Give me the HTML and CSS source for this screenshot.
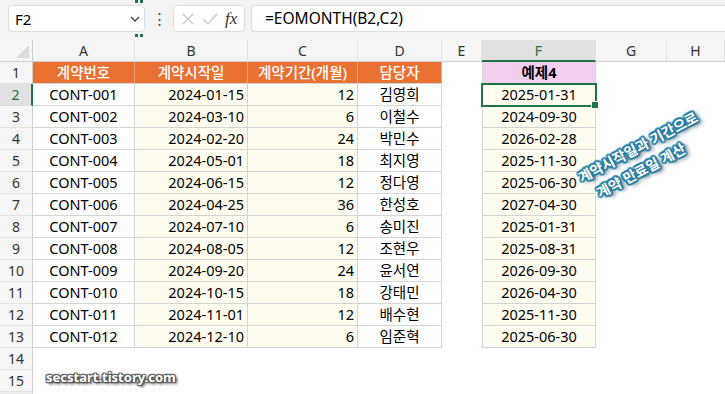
FILE: index.html
```html
<!DOCTYPE html>
<html lang="ko">
<head>
<meta charset="utf-8"/>
<title>EOMONTH 예제</title>
<link rel="stylesheet" href="styles.css">
</head>
<body>
<div class="fbar">
  <div class="namebox"><span>F2</span><svg width="12" height="8" viewBox="0 0 12 8"><path d="M2 2 L6 6 L10 2" fill="none" stroke="#444" stroke-width="1.3"/></svg></div>
  <div class="dots">⋮</div>
  <div class="fxbox">
    <svg width="14" height="14" viewBox="0 0 14 14"><path d="M2 2 L12 12 M12 2 L2 12" stroke="#c4c4c4" stroke-width="1.2"/></svg>
    <svg width="16" height="14" viewBox="0 0 16 14"><path d="M1 7 L6 12 L15 2" fill="none" stroke="#c4c4c4" stroke-width="1.2"/></svg>
    <span class="fx">fx</span>
  </div>
  <div class="formula">=EOMONTH(B2,C2)</div>
  <div class="split top"></div>
  <div class="split bottom"></div>
</div>

<div class="sheet">
  <div class="row colhead">
    <div class="corner"></div><div>A</div><div>B</div><div>C</div><div>D</div><div>E</div><div class="on">F</div><div>G</div><div>H</div>
  </div>
  <div class="row">
    <div class="rh">1</div>
    <div class="t hd">계약번호</div><div class="t hd">계약시작일</div><div class="t hd">계약기간(개월)</div><div class="t hd">담당자</div>
    <div></div><div class="t fc ex">예제4</div><div></div><div></div>
  </div>
  <div class="row">
    <div class="rh on">2</div>
    <div class="t ctr">CONT-001</div><div class="t y num">2024-01-15</div><div class="t y num">12</div><div class="t ctr">김영희</div>
    <div></div><div class="t fc y ctr sel">2025-01-31</div><div></div><div></div>
  </div>
  <div class="row">
    <div class="rh">3</div>
    <div class="t ctr">CONT-002</div><div class="t y num">2024-03-10</div><div class="t y num">6</div><div class="t ctr">이철수</div>
    <div></div><div class="t fc y ctr">2024-09-30</div><div></div><div></div>
  </div>
  <div class="row">
    <div class="rh">4</div>
    <div class="t ctr">CONT-003</div><div class="t y num">2024-02-20</div><div class="t y num">24</div><div class="t ctr">박민수</div>
    <div></div><div class="t fc y ctr">2026-02-28</div><div></div><div></div>
  </div>
  <div class="row">
    <div class="rh">5</div>
    <div class="t ctr">CONT-004</div><div class="t y num">2024-05-01</div><div class="t y num">18</div><div class="t ctr">최지영</div>
    <div></div><div class="t fc y ctr">2025-11-30</div><div></div><div></div>
  </div>
  <div class="row">
    <div class="rh">6</div>
    <div class="t ctr">CONT-005</div><div class="t y num">2024-06-15</div><div class="t y num">12</div><div class="t ctr">정다영</div>
    <div></div><div class="t fc y ctr">2025-06-30</div><div></div><div></div>
  </div>
  <div class="row">
    <div class="rh">7</div>
    <div class="t ctr">CONT-006</div><div class="t y num">2024-04-25</div><div class="t y num">36</div><div class="t ctr">한성호</div>
    <div></div><div class="t fc y ctr">2027-04-30</div><div></div><div></div>
  </div>
  <div class="row">
    <div class="rh">8</div>
    <div class="t ctr">CONT-007</div><div class="t y num">2024-07-10</div><div class="t y num">6</div><div class="t ctr">송미진</div>
    <div></div><div class="t fc y ctr">2025-01-31</div><div></div><div></div>
  </div>
  <div class="row">
    <div class="rh">9</div>
    <div class="t ctr">CONT-008</div><div class="t y num">2024-08-05</div><div class="t y num">12</div><div class="t ctr">조현우</div>
    <div></div><div class="t fc y ctr">2025-08-31</div><div></div><div></div>
  </div>
  <div class="row">
    <div class="rh">10</div>
    <div class="t ctr">CONT-009</div><div class="t y num">2024-09-20</div><div class="t y num">24</div><div class="t ctr">윤서연</div>
    <div></div><div class="t fc y ctr">2026-09-30</div><div></div><div></div>
  </div>
  <div class="row">
    <div class="rh">11</div>
    <div class="t ctr">CONT-010</div><div class="t y num">2024-10-15</div><div class="t y num">18</div><div class="t ctr">강태민</div>
    <div></div><div class="t fc y ctr">2026-04-30</div><div></div><div></div>
  </div>
  <div class="row">
    <div class="rh">12</div>
    <div class="t ctr">CONT-011</div><div class="t y num">2024-11-01</div><div class="t y num">12</div><div class="t ctr">배수현</div>
    <div></div><div class="t fc y ctr">2025-11-30</div><div></div><div></div>
  </div>
  <div class="row">
    <div class="rh">13</div>
    <div class="t ctr">CONT-012</div><div class="t y num">2024-12-10</div><div class="t y num">6</div><div class="t ctr">임준혁</div>
    <div></div><div class="t fc y ctr">2025-06-30</div><div></div><div></div>
  </div>
  <div class="row">
    <div class="rh">14</div><div></div><div></div><div></div><div></div><div></div><div></div><div></div><div></div>
  </div>
  <div class="row">
    <div class="rh">15</div><div></div><div></div><div></div><div></div><div></div><div></div><div></div><div></div>
  </div>
  <div class="row short">
    <div class="rh"></div><div></div><div></div><div></div><div></div><div></div><div></div><div></div><div></div>
  </div>

  <div class="note">
    <div>계약시작일과 기간으로</div>
    <div class="l2">계약 만료일 계산</div>
  </div>
  <div class="mark">secstart.tistory.com</div>
</div>
</body>
</html>
```

FILE: styles.css
```css
html, body {
  height: 394px;
  overflow: hidden;
}
body {
  margin: 0;
  background: #fff;
  font-family: "Noto Sans", "Noto Sans CJK KR", sans-serif;
  font-size: 14.5px;
  color: #000;
}

/* formula bar */
.fbar {
  position: relative;
  height: 40px;
  background: #f3f3f3;
  display: flex;
  align-items: flex-start;
  padding: 5px 0 0 8px;
  box-sizing: border-box;
}
.namebox {
  width: 137px;
  height: 27px;
  box-sizing: border-box;
  background: #fff;
  border: 1px solid #dedede;
  border-radius: 4px;
  display: flex;
  align-items: center;
  justify-content: space-between;
  padding: 0 3px 0 6px;
  font-size: 15px;
}
.dots {
  width: 28px;
  text-align: center;
  font-size: 15px;
  line-height: 27px;
  color: #444;
}
.fxbox {
  width: 72px;
  height: 27px;
  box-sizing: border-box;
  background: #fff;
  border: 1px solid #dedede;
  border-radius: 4px;
  display: flex;
  align-items: center;
  gap: 7px;
  padding-left: 7px;
}
.fx {
  font-family: "Liberation Serif", serif;
  font-style: italic;
  font-size: 17px;
  color: #333;
}
.formula {
  flex: 1;
  margin-left: 6px;
  height: 27px;
  box-sizing: border-box;
  background: #fff;
  border: 1px solid #dedede;
  border-right: none;
  border-radius: 4px 0 0 4px;
  padding-left: 13px;
  line-height: 25px;
  font-size: 15.5px;
}
.split {
  position: absolute;
  left: 135px;
  width: 9px;
  height: 3px;
  background: repeating-linear-gradient(90deg, #217346 0 3px, transparent 3px 5px);
}
.split.top { top: 0; }
.split.bottom { top: 34px; }

/* sheet grid */
.sheet {
  position: relative;
}
.row {
  display: grid;
  grid-template-columns: 33px 102px 113px 110px 84px 40px 114px 71px 1fr;
  height: 22px;
}
.row > div {
  box-sizing: border-box;
  height: 22px;
  line-height: 21px;
  white-space: nowrap;
  overflow: hidden;
}
.row.short,
.row.short > div {
  height: 2px;
}
.colhead > div {
  background: #f5f5f5;
  border-right: 1px solid #e1e1e1;
  border-bottom: 1px solid #d0d0d0;
  text-align: center;
  color: #333;
  font-size: 14px;
}
.colhead > div.on {
  background: #e1e1e1;
  color: #217346;
  border-bottom: 2px solid #217346;
}
.colhead .corner {
  position: relative;
  border-right: 1px solid #d0d0d0;
}
.corner::after {
  content: "";
  position: absolute;
  right: 3px;
  bottom: 3px;
  border-left: 13px solid transparent;
  border-bottom: 13px solid #dcdcdc;
}
.rh {
  background: #f5f5f5;
  border-right: 1px solid #d0d0d0;
  border-bottom: 1px solid #e1e1e1;
  text-align: center;
  color: #333;
  font-size: 14px;
}
.rh.on {
  background: #e1e1e1;
  color: #217346;
  border-right: 2px solid #217346;
}

/* table cells */
.t {
  border-right: 1px solid #d4d4d4;
  border-bottom: 1px solid #d4d4d4;
}
.fc {
  border-left: 1px solid #d4d4d4;
}
.hd {
  background: #e97132;
  color: #fff;
  text-align: center;
  font-weight: 500;
  border-right-color: #f0a57c;
}
.ex {
  background: #f2ceef;
  text-align: center;
  font-weight: bold;
}
.y {
  background: #fffdf0;
}
.ctr {
  text-align: center;
}
.num {
  text-align: right;
  padding-right: 3px;
}
.row > div.sel {
  position: relative;
  overflow: visible;
  outline: 2px solid #217346;
  outline-offset: -1px;
}
.sel::after {
  content: "";
  position: absolute;
  right: -4px;
  bottom: -4px;
  width: 6px;
  height: 6px;
  background: #217346;
  border: 1px solid #fff;
}

/* overlays */
.note {
  position: absolute;
  left: 574px;
  top: 128px;
  transform: rotate(-28deg);
  transform-origin: left top;
  font-family: "Noto Sans CJK KR", sans-serif;
  font-weight: bold;
  font-size: 14px;
  line-height: 22px;
  color: #fff;
  white-space: nowrap;
  text-shadow: 0 0 2px #2b7fa3, 1.5px 1.5px 1px #2b7fa3, -1.5px -1.5px 1px #2b7fa3, 1.5px -1.5px 1px #2b7fa3, -1.5px 1.5px 1px #2b7fa3, 0 2px 1px #2b7fa3, 0 -2px 1px #2b7fa3, 2px 0 1px #2b7fa3, -2px 0 1px #2b7fa3, 3px 3px 4px #16465c;
}
.note .l2 {
  padding-left: 9px;
}
.mark {
  position: absolute;
  left: 46px;
  top: 328px;
  font-family: "Noto Sans", sans-serif;
  font-weight: bold;
  font-size: 13px;
  color: #fff;
  text-shadow: 0 0 2px #555, 1px 1px 1px #555, -1px -1px 1px #555, 1px -1px 1px #555, -1px 1px 1px #555, 2px 2px 3px #333;
}
```
